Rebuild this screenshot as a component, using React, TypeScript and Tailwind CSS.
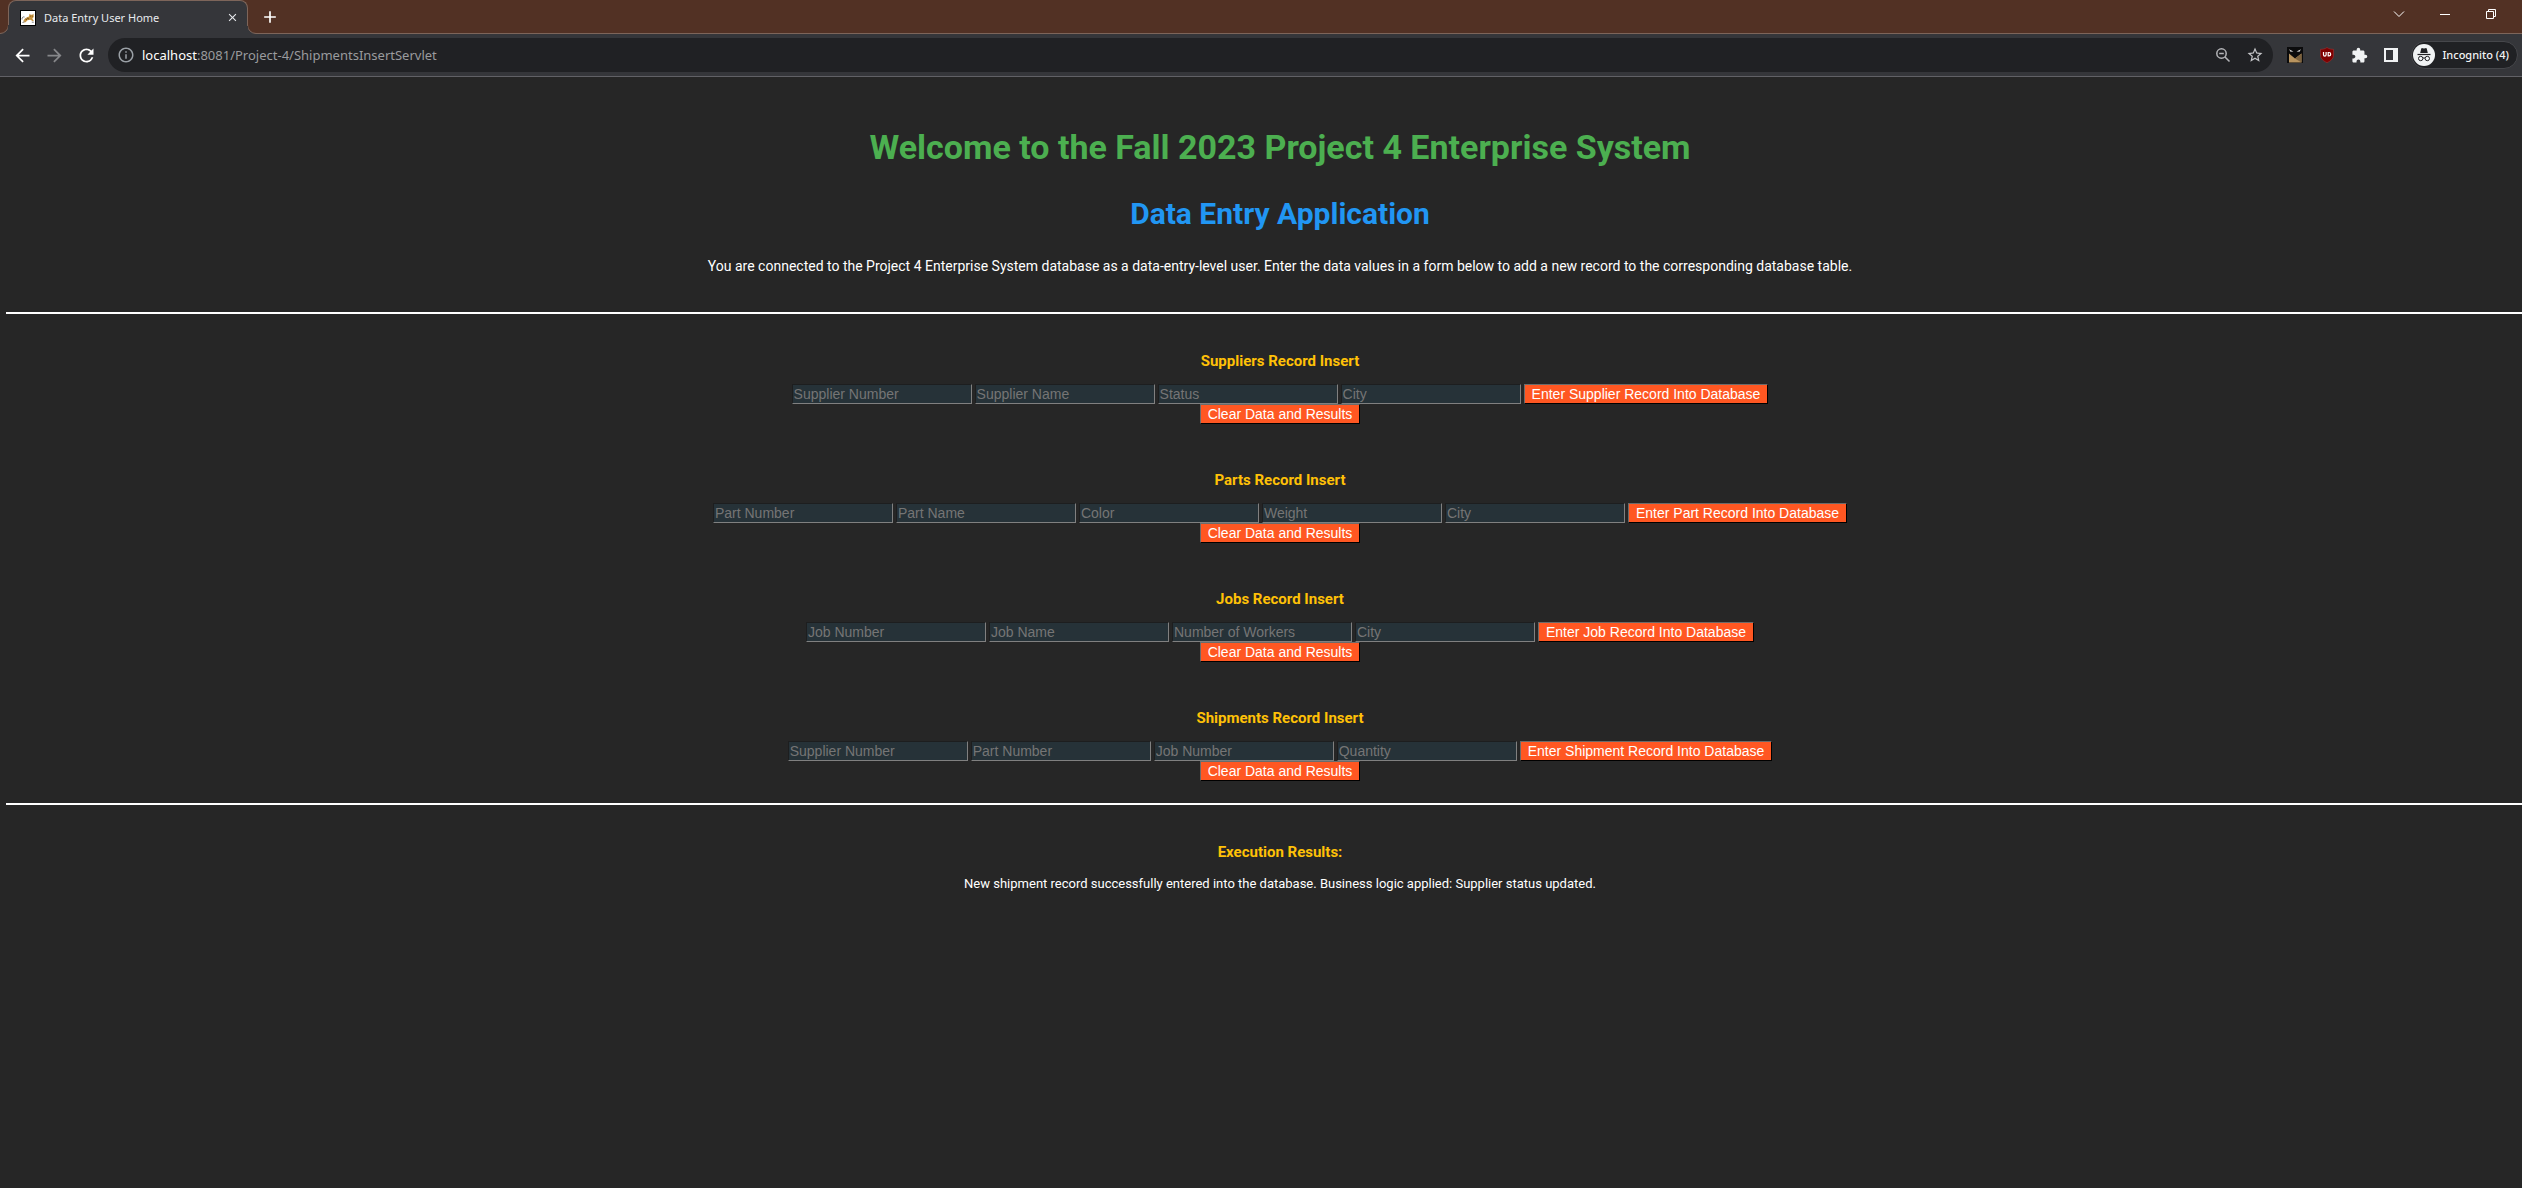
import type { ReactNode } from "react";
import {
  MdAdd,
  MdArrowBack,
  MdArrowForward,
  MdClose,
  MdExtension,
  MdInfoOutline,
  MdRefresh,
  MdStarBorder,
} from "react-icons/md";

type RecordForm = { title: string; fields: string[]; submit: string };

const forms: RecordForm[] = [
  {
    title: "Suppliers Record Insert",
    fields: ["Supplier Number", "Supplier Name", "Status", "City"],
    submit: "Enter Supplier Record Into Database",
  },
  {
    title: "Parts Record Insert",
    fields: ["Part Number", "Part Name", "Color", "Weight", "City"],
    submit: "Enter Part Record Into Database",
  },
  {
    title: "Jobs Record Insert",
    fields: ["Job Number", "Job Name", "Number of Workers", "City"],
    submit: "Enter Job Record Into Database",
  },
  {
    title: "Shipments Record Insert",
    fields: ["Supplier Number", "Part Number", "Job Number", "Quantity"],
    submit: "Enter Shipment Record Into Database",
  },
];

function IconButton({ label, children, className = "" }: { label: string; children: ReactNode; className?: string }) {
  return (
    <button type="button" aria-label={label} className={`flex h-8 w-8 shrink-0 items-center justify-center ${className}`}>
      {children}
    </button>
  );
}

function TomcatIcon() {
  return (
    <svg viewBox="0 0 16 16" className="h-4 w-4 shrink-0">
      <rect x="0.5" y="0.5" width="15" height="15" fill="#fff" stroke="#000" />
      <path d="M3 11.5 4.5 9 7 7.200 9 6.500 9.500 3.800 10.700 4.800 12.200 4.800 13.500 3.800 13.700 7 12.300 8.600 13.800 10.800 12.800 11.200 10.500 9.800 7.500 10.300 5.500 12.300 3.300 12.600 5 10.700Z" fill="#c9953f" />
      <path d="M10.300 6.200h.8M12.200 6.200h.7M7 8l2 1M5.500 9l1.500.8" stroke="#5d3f16" strokeWidth="0.8" />
      <path d="M2 9.500C1.800 7.500 3 6.500 4.500 7M2.500 12.500l2-.8" stroke="#555" strokeWidth="0.8" fill="none" />
      <path d="M11.800 12.200h2" stroke="#555" strokeWidth="0.7" />
    </svg>
  );
}

function TabStrip() {
  return (
    <div className="flex h-[34px] items-stretch border-b border-[#7d655a] bg-[#523124]">
      <div className="relative -mb-px ml-2 flex w-60 items-center rounded-t-lg border border-b-0 border-[#7d655a] bg-[#35363a] pr-2 pl-[11px]">
        <svg viewBox="0 0 9 9" className="absolute bottom-0 -left-[9px] h-[9px] w-[9px]">
          <path d="M9 0v9H0V8.5A8.5 8.5 0 0 0 8.5 0Z" fill="#35363a" />
          <path d="M0 8.5A8.5 8.5 0 0 0 8.5 0" fill="none" stroke="#7d655a" />
          <path d="M8.5 0v9" stroke="#35363a" />
        </svg>
        <svg viewBox="0 0 9 9" className="absolute -right-[9px] bottom-0 h-[9px] w-[9px]">
          <path d="M0 0v9H9V8.5A8.5 8.5 0 0 1 .5 0Z" fill="#35363a" />
          <path d="M9 8.5A8.5 8.5 0 0 1 .5 0" fill="none" stroke="#7d655a" />
          <path d="M.5 1v8" stroke="#35363a" />
        </svg>
        <TomcatIcon />
        <span className="ml-2 flex-1 text-[11px] leading-4 text-[#e8eaed]">Data Entry User Home</span>
        <button type="button" aria-label="Close tab" className="text-[#e8eaed]">
          <MdClose size={13} />
        </button>
      </div>
      <button type="button" aria-label="New tab" className="ml-3 text-white">
        <MdAdd size={20} />
      </button>
      <div className="ml-auto flex h-7 items-center text-white">
        <button type="button" aria-label="Search tabs" className="flex h-7 w-[46px] items-center justify-center">
          <svg viewBox="0 0 12 12" className="h-3 w-3">
            <path d="M1 3.5 6 8.5 11 3.5" fill="none" stroke="#fff" />
          </svg>
        </button>
        <button type="button" aria-label="Minimize" className="flex h-7 w-[46px] items-center justify-center">
          <svg viewBox="0 0 10 10" className="h-2.5 w-2.5">
            <path d="M0 5.5H10" stroke="#fff" />
          </svg>
        </button>
        <button type="button" aria-label="Restore" className="mr-2 flex h-7 w-[46px] items-center justify-center">
          <svg viewBox="0 0 10 10" className="h-2.5 w-2.5">
            <path d="M.5 2.5h7v7h-7ZM2.5 2.5V.5h7v7h-2" fill="none" stroke="#fff" />
          </svg>
        </button>
      </div>
    </div>
  );
}

function Toolbar() {
  return (
    <div className="flex h-[43px] items-center border-b border-[#616166] bg-[#35363a] pr-1 pl-1.5">
      <IconButton label="Back" className="text-white">
        <MdArrowBack size={21} />
      </IconButton>
      <IconButton label="Forward" className="text-[#86878a]">
        <MdArrowForward size={21} />
      </IconButton>
      <IconButton label="Reload" className="text-white">
        <MdRefresh size={21} />
      </IconButton>
      <div className="ml-1.5 flex h-[34px] flex-1 items-center rounded-full bg-[#202124] pr-0.5 pl-[9px]">
        <MdInfoOutline size={18} className="text-[#9aa0a6]" />
        <div className="ml-[7px] flex-1 text-[13px] leading-5 text-[#9a9b9e]">
          <span className="text-white">localhost</span>:8081/Project-4/ShipmentsInsertServlet
        </div>
        <IconButton label="Zoom">
          <svg viewBox="0 0 16 16" className="h-4 w-4" fill="none" stroke="#b4b5b8" strokeWidth="1.5">
            <circle cx="6.5" cy="6.5" r="4.7" />
            <path d="M10 10 14.5 14.5M4.2 6.5h4.6" />
          </svg>
        </IconButton>
        <IconButton label="Bookmark this tab" className="text-[#c4c5c8]">
          <MdStarBorder size={18} />
        </IconButton>
      </div>
      <IconButton label="Dark mask extension" className="ml-1.5">
        <svg viewBox="0 0 16 16" className="h-4 w-4">
          <path d="M0 0h16v16H0Z" fill="#0b0b0c" />
          <path d="M2 6.5 8 11.5 14.5 6.5V15.5H2Z" fill="#b8945f" />
          <path d="M8 11.5 14.5 6.5V15.5Z" fill="#7d6340" />
          <path d="M2 2.2 6.5 4.5 3.5 4.8ZM14 2.2 9.5 4.5 12.5 4.8Z" fill="#d5d5d5" />
        </svg>
      </IconButton>
      <IconButton label="uBlock Origin">
        <svg viewBox="0 0 16 16" className="h-4 w-4">
          <path d="M8 .5C10 2 12.500 2.300 14.500 2.300V8c0 4-3 6-6.500 7.700C4.500 14 1.500 12 1.500 8V2.300C3.500 2.300 6 2 8 .5Z" fill="#800000" stroke="#9c3434" strokeWidth="0.6" />
          <path d="M4.500 5v2.800a1.300 1.300 0 0 0 2.600 0V5" fill="none" stroke="#fff" strokeWidth="1.200" />
          <path d="M9.200 5.500h.8a1.700 1.700 0 0 1 0 3.400h-.8Z" fill="none" stroke="#fff" strokeWidth="1.200" />
        </svg>
      </IconButton>
      <IconButton label="Extensions" className="text-[#f1f3f4]">
        <MdExtension size={17} />
      </IconButton>
      <IconButton label="Side panel">
        <svg viewBox="0 0 14 14" className="h-3.5 w-3.5">
          <path d="M0 0h14v14H0ZM2 2v10h7V2Z" fill="#f1f3f4" fillRule="evenodd" />
        </svg>
      </IconButton>
      <button
        type="button"
        className="ml-1 flex h-7 shrink-0 items-center rounded-full border border-[#46474b] bg-[#202124] pr-2 pl-px text-[11px] leading-4 font-medium text-[#f1f3f4]"
      >
        <svg viewBox="0 0 22 22" className="mr-[7px] h-[22px] w-[22px]">
          <circle cx="11" cy="11" r="11" fill="#f1f3f4" />
          <path d="M7.200 9 8.200 4.800c.2-.7.700-.8 1.300-.6l1.500.4 1.500-.4c.6-.2 1.100-.1 1.300.6L14.800 9Z" fill="#202124" />
          <path d="M4.500 10.500h13" stroke="#202124" strokeWidth="1.200" />
          <circle cx="7.700" cy="14.500" r="2.200" fill="none" stroke="#202124" />
          <circle cx="14.300" cy="14.500" r="2.200" fill="none" stroke="#202124" />
          <path d="M9.900 14.200q1.100-.7 2.200 0" fill="none" stroke="#202124" />
        </svg>
        Incognito (4)
      </button>
    </div>
  );
}

const actionButton =
  "h-5 border border-t-[#6b6b6b] border-r-black border-b-black border-l-[#6b6b6b] bg-[#ff5722] px-[7px] text-[14px] leading-[18px] whitespace-nowrap text-white";

function RecordSection({ form }: { form: RecordForm }) {
  return (
    <form onSubmit={(e) => e.preventDefault()}>
      <h3 className="text-[15px] leading-5 font-bold text-[#ffc107]">{form.title}</h3>
      <div className="mt-[13px] flex flex-col items-center font-['Liberation_Sans',Arial,sans-serif]">
        <div className="flex flex-wrap justify-center gap-[3px]">
          {form.fields.map((field) => (
            <input
              key={field}
              type="text"
              aria-label={field}
              placeholder={field}
              className="h-5 w-[180px] border border-t-[#1d1e1f] border-r-[#808080] border-b-[#808080] border-l-[#1d1e1f] bg-[#263238] px-px text-[14px] leading-[18px] text-white placeholder:text-[#757575]"
            />
          ))}
          <button type="submit" className={actionButton}>
            {form.submit}
          </button>
        </div>
        <button type="reset" className={actionButton}>
          Clear Data and Results
        </button>
      </div>
    </form>
  );
}

export default function App() {
  return (
    <div className="min-h-screen overflow-x-hidden bg-[#262626] font-['Noto_Sans','Open_Sans',sans-serif]">
      <header>
        <TabStrip />
        <Toolbar />
      </header>
      <main className="pl-1.5 text-center font-[Roboto,sans-serif] text-white">
        <div className="pt-[50px] pl-8">
          <h1 className="text-[34px] leading-10 font-bold text-[#4caf50]">
            Welcome to the Fall 2023 Project 4 Enterprise System
          </h1>
          <h2 className="mt-[29px] text-[30px] leading-9 font-bold text-[#2196f3]">Data Entry Application</h2>
          <p className="mt-6 text-[14px] leading-5">
            You are connected to the Project 4 Enterprise System database as a data-entry-level user. Enter the data
            values in a form below to add a new record to the corresponding database table.
          </p>
        </div>
        <hr className="mt-9 border-t-2 border-white" />
        <div className="mt-[37px] flex flex-col gap-[46px] pl-8">
          {forms.map((form) => (
            <RecordSection key={form.title} form={form} />
          ))}
        </div>
        <hr className="mt-[22px] border-t-2 border-white" />
        <section className="mt-[37px] pl-8">
          <h3 className="text-[15px] leading-5 font-bold text-[#ffc107]">Execution Results:</h3>
          <p className="mt-3 text-[13px] leading-5">
            New shipment record successfully entered into the database. Business logic applied: Supplier status updated.
          </p>
        </section>
      </main>
    </div>
  );
}
